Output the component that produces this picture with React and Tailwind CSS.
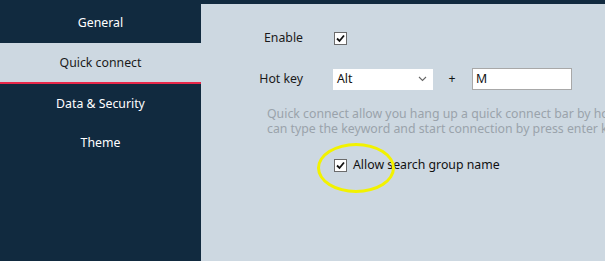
import React from "react";

export default function App() {
  const font = { fontFamily: '"Noto Sans", "Open Sans", sans-serif' };
  return (
    <div className="w-[605px] h-[261px] flex bg-[#112a3f] overflow-hidden text-[12.3px]" style={font}>
      <div className="w-[201px] shrink-0 flex flex-col">
        <div className="h-[43px] flex items-center justify-center pt-[3px] text-white">General</div>
        <div className="h-[39px] flex items-center justify-center pt-[2px] bg-[#cdd8e1] text-[#1a1a1a]">Quick connect</div>
        <div className="h-[2px] bg-[#e8284a]" />
        <div className="h-[39px] flex items-center justify-center pt-[2px] text-white">Data &amp; Security</div>
        <div className="h-[39px] flex items-center justify-center pt-[2px] text-white">Theme</div>
      </div>
      <div className="flex-1 mt-[4px] bg-[#cdd8e1] relative overflow-hidden pt-[24px]">
        <div className="flex items-center h-[21px]">
          <div className="w-[102px] text-right text-[#1a1a1a]">Enable</div>
          <div className="ml-[31px] w-[13px] h-[13px] border border-[#6b6b6b] bg-white flex items-center justify-center">
            <svg width="11" height="11" viewBox="0 0 11 11">
              <path d="M2 5.5 L4.5 8 L9 2.5" fill="none" stroke="#111" strokeWidth="1.8" />
            </svg>
          </div>
        </div>
        <div className="flex items-center h-[22px] mt-[19px]">
          <div className="w-[102px] text-right text-[#1a1a1a]">Hot key</div>
          <div className="ml-[30px] w-[100px] h-[21px] bg-white flex items-center justify-between pl-[4px] pr-[6px] text-[#111]">
            <span>Alt</span>
            <svg width="9" height="6" viewBox="0 0 9 6">
              <path d="M1 1 L4.5 4.5 L8 1" fill="none" stroke="#666" strokeWidth="1.1" />
            </svg>
          </div>
          <div className="ml-[15px] w-[8px] text-center text-[#111]">+</div>
          <div className="ml-[16px] w-[100px] h-[22px] bg-white border border-[#a8a8a8] flex items-center pl-[3px] text-[#111]">M</div>
        </div>
        <div className="ml-[66px] mt-[16px] text-[#9aa3ab] leading-[15px] whitespace-nowrap">
          <div>Quick connect allow you hang up a quick connect bar by hotkey, then you</div>
          <div>can type the keyword and start connection by press enter key.</div>
        </div>
        <div className="flex items-center ml-[133px] mt-[21px] h-[16px]">
          <div className="w-[13px] h-[13px] border border-[#6b6b6b] bg-white flex items-center justify-center">
            <svg width="11" height="11" viewBox="0 0 11 11">
              <path d="M2 5.5 L4.5 8 L9 2.5" fill="none" stroke="#111" strokeWidth="1.8" />
            </svg>
          </div>
          <span className="ml-[6px] text-[#111]">Allow search group name</span>
        </div>
        <div className="absolute left-[116px] top-[139px] w-[78px] h-[50px] rounded-[50%] border-[3px] border-[#f2f200]" />
      </div>
    </div>
  );
}
